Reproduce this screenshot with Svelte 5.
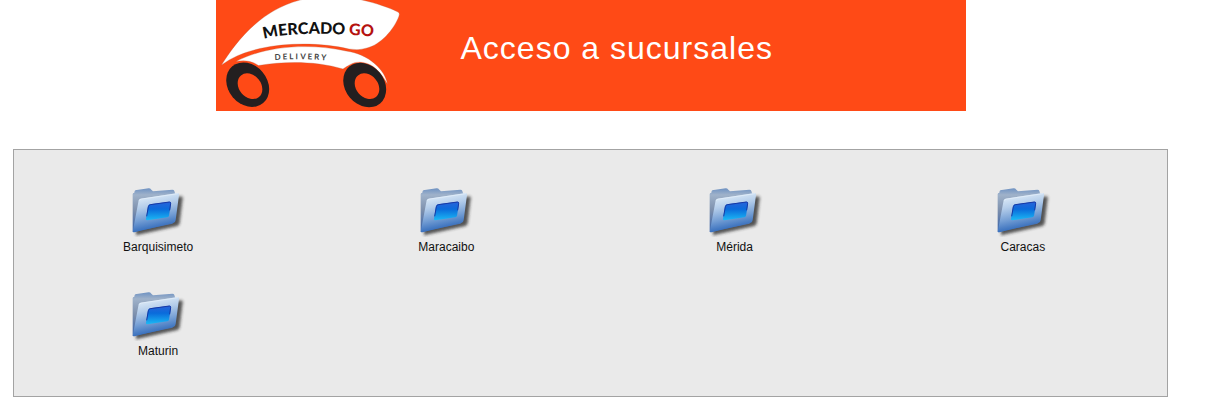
<script lang="ts">
  let sucursales: Array<string> = [
    "Barquisimeto",
    "Maracaibo",
    "Mérida",
    "Caracas",
    "Maturin"
  ];
</script>

<div class="page">
  <header class="banner">
    <svg class="logo" width="190" height="111" viewBox="0 0 190 111" role="img" aria-label="Mercado Go Delivery">
      <defs>
        <path id="name-line" d="M48 39 Q86 29 172 38" />
        <path id="delivery-line" d="M59 60 Q85 58 118 61" />
      </defs>
      <path class="body" d="M5.5 65 C18 45 42 11 84 0 C105 -5 132 -5 146 0 C160 3 174 8 182 12 Q184 13 183 16 C178 30 164 45 151 48 Q143 51 133 49 C108 43 73 42 44 48.5 Q20 54 5.5 65 Z" />
      <path class="body" d="M20 61.5 C48 46.500 91 42.500 130 51 C153 54 169 70 171.500 84 C165 73 158 64 147 62.500 C138 61 133 65 127 69 C100 61 70 61 42.500 65.500 C36 61 29 60 20 61.500 Z" />
      <g class="wheel">
        <ellipse cx="31.700" cy="84.700" rx="19.500" ry="24" transform="rotate(-40 31.7 84.7)" />
        <ellipse cx="148.700" cy="85" rx="19.500" ry="24" transform="rotate(-40 148.7 85)" />
      </g>
      <g class="hub">
        <ellipse cx="34" cy="86.200" rx="11" ry="14" transform="rotate(-40 34 86.2)" />
        <ellipse cx="151" cy="86.200" rx="11" ry="14" transform="rotate(-40 151 86.2)" />
      </g>
      <text class="name"><textPath href="#name-line">MERCADO <tspan class="go">GO</tspan></textPath></text>
      <text class="delivery"><textPath href="#delivery-line">DELIVERY</textPath></text>
    </svg>
    <h1>Acceso a sucursales</h1>
  </header>

  <main class="panel">
    {#each sucursales as sucursal}
      <a class="sucursal" href="#{sucursal}">
        <svg width="56" height="50" viewBox="30 20 168 150" aria-hidden="true">
          <defs>
            <linearGradient id="back" x1="0" y1="0" x2="0" y2="1">
              <stop offset="0" stop-color="#6f92c2" />
              <stop offset="0.15" stop-color="#9fb2ca" />
              <stop offset="0.5" stop-color="#7d90ad" />
              <stop offset="1" stop-color="#3560a8" />
            </linearGradient>
            <linearGradient id="front" x1="0" y1="0" x2="0.25" y2="1">
              <stop offset="0" stop-color="#f2fafe" />
              <stop offset="0.4" stop-color="#b4cdea" />
              <stop offset="0.7" stop-color="#749ed4" />
              <stop offset="1" stop-color="#2c66b8" />
            </linearGradient>
            <linearGradient id="screen" x1="0" y1="0" x2="0" y2="1">
              <stop offset="0" stop-color="#2a62d8" />
              <stop offset="0.4" stop-color="#0a6bdb" />
              <stop offset="1" stop-color="#1bbaf5" />
            </linearGradient>
            <filter id="shadow" x="-20%" y="-20%" width="150%" height="150%">
              <feGaussianBlur stdDeviation="5" />
            </filter>
          </defs>
          <path d="M48 72 L184 48 Q189 48 188 54 L179 128 Q178 135 172 137 L48 165 Z" fill="#222" opacity="0.75" filter="url(#shadow)" />
          <path d="M38 42 Q38 38 43 37 L44 32 Q45 29 50 29 L86 24 Q91 24 94 28 L99 33 L157 28 Q162 28 163 32 L166 42 L158 130 L38 155 Z" fill="url(#back)" />
          <path d="M56 60 Q57 56 62 55 L173 38 Q178 38 177 44 L167 119 Q166 126 160 128 L43 156 Q37 157 39 150 Z" fill="url(#front)" />
          <path d="M58 61 Q59 57 64 56 L174 40" fill="none" stroke="#e6f0fa" stroke-width="2" />
          <path d="M84 78 Q85 73 90 72 L149 64 Q154 64 153 69 L147 106 Q146 110 142 111 L82 120 Q77 120 78 115 Z" fill="url(#screen)" />
          <path d="M80 108 L85 79 Q86 74 91 73 L148 65 Q153 65 152 70 L149 90" fill="none" stroke="#1739a5" stroke-width="3" />
        </svg>
        <span>{sucursal}</span>
      </a>
    {/each}
  </main>
</div>

<style>
  :global(body) {
    background: #fff;
    font-family: "Liberation Sans", Arial, sans-serif;
  }
  .page {
    display: flex;
    flex-direction: column;
    align-items: center;
    gap: 38px;
    padding: 0 52px 19px 13px;
  }
  .banner {
    display: flex;
    width: 100%;
    max-width: 750px;
    background: #ff4a16;
  }
  .logo {
    flex: none;
  }
  .body {
    fill: #fff;
    stroke: #b65a3a;
    stroke-width: 0.3;
  }
  .wheel {
    fill: #231f20;
  }
  .hub {
    fill: #ff4a16;
  }
  .name {
    font: 900 16px Lato, sans-serif;
    fill: #111;
  }
  .go {
    fill: #b5120f;
  }
  .delivery {
    font: 700 8px Lato, sans-serif;
    letter-spacing: 2px;
    fill: #444;
  }
  h1 {
    margin: 28px 0 0 55px;
    font-size: 32px;
    line-height: 40px;
    font-weight: 400;
    letter-spacing: 1px;
    color: #fff;
  }
  .panel {
    display: grid;
    grid-template-columns: repeat(4, 1fr);
    row-gap: 34px;
    align-self: stretch;
    padding: 37px 0 35px;
    border: 1px solid #a3a3a3;
    background: #eaeaea;
  }
  .sucursal {
    display: flex;
    flex-direction: column;
    align-items: center;
    color: #111;
    font-size: 12px;
    line-height: 20px;
    text-decoration: none;
  }
</style>
